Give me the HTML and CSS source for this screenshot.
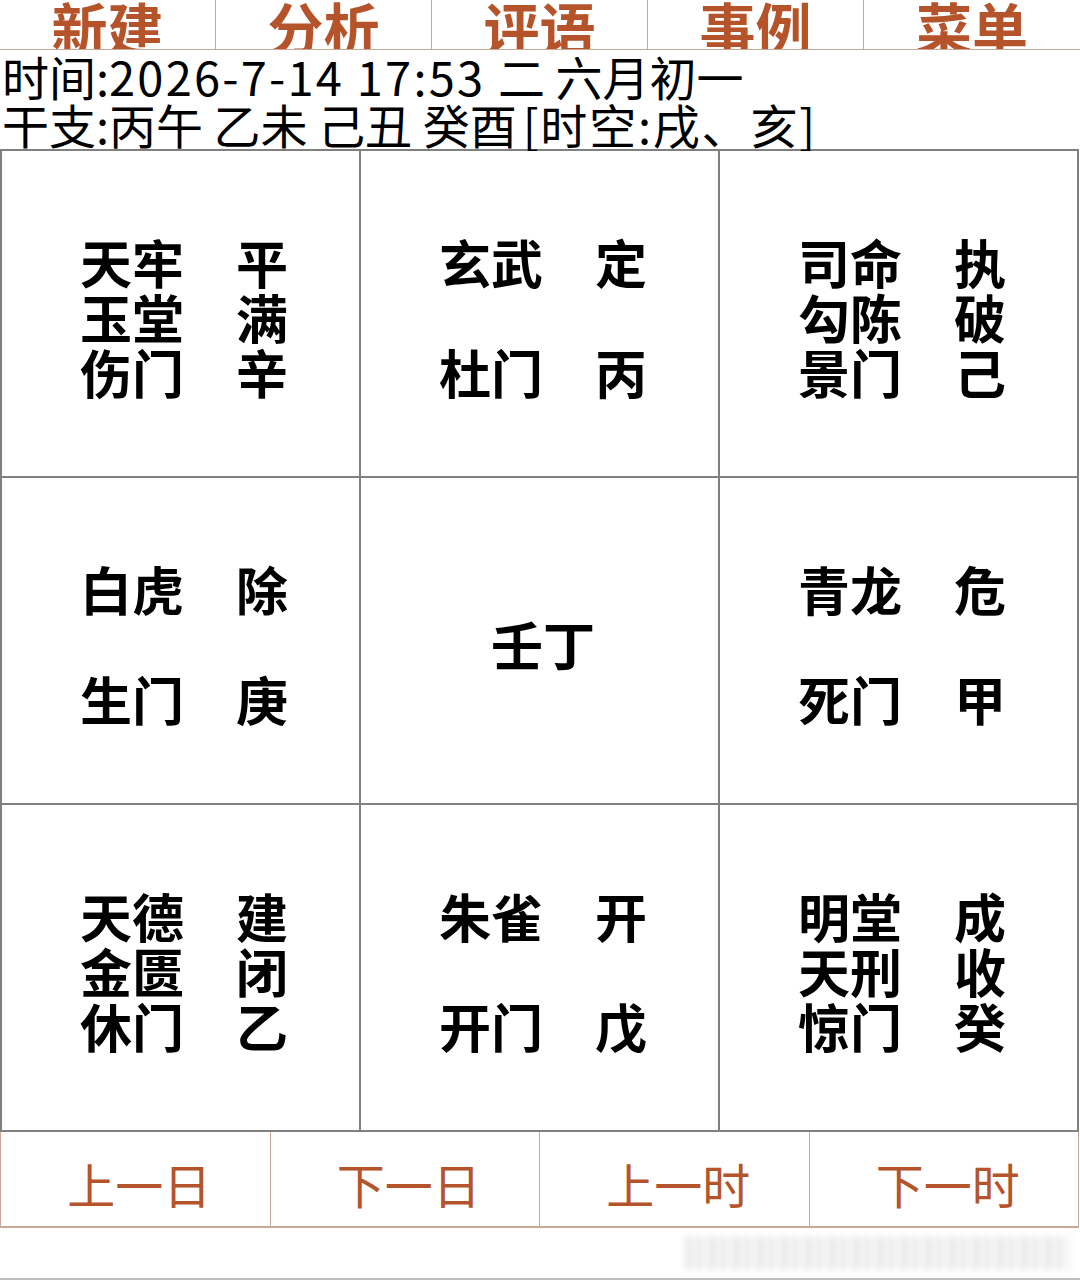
FILE: index.html
```html
<!DOCTYPE html>
<html lang="zh-CN">
<head>
<meta charset="utf-8">
<title>奇门</title>
<link rel="stylesheet" href="styles.css">
</head>
<body>
<div class="topnav">
  <div class="tab"><span>新建</span></div>
  <div class="tab"><span>分析</span></div>
  <div class="tab"><span>评语</span></div>
  <div class="tab"><span>事例</span></div>
  <div class="tab"><span>菜单</span></div>
</div>
<div class="info">
  <div class="info-line">时间:<span class="num">2026-7-14 17:53 </span>二 六月初一</div>
  <div class="info-line">干支:丙午 乙未 己丑 癸酉<span class="br">[时空:戌、亥]</span></div>
</div>
<div class="board">
  <div class="cell"><div class="lines"><div class="ln">天牢　平</div><div class="ln">玉堂　满</div><div class="ln">伤门　辛</div></div></div>
  <div class="cell"><div class="lines"><div class="ln">玄武　定</div><div class="ln blank"> </div><div class="ln">杜门　丙</div></div></div>
  <div class="cell"><div class="lines"><div class="ln">司命　执</div><div class="ln">勾陈　破</div><div class="ln">景门　己</div></div></div>
  <div class="cell"><div class="lines"><div class="ln">白虎　除</div><div class="ln blank"> </div><div class="ln">生门　庚</div></div></div>
  <div class="cell"><div class="lines"><div class="ln">壬丁</div></div></div>
  <div class="cell"><div class="lines"><div class="ln">青龙　危</div><div class="ln blank"> </div><div class="ln">死门　甲</div></div></div>
  <div class="cell"><div class="lines"><div class="ln">天德　建</div><div class="ln">金匮　闭</div><div class="ln">休门　乙</div></div></div>
  <div class="cell"><div class="lines"><div class="ln">朱雀　开</div><div class="ln blank"> </div><div class="ln">开门　戊</div></div></div>
  <div class="cell"><div class="lines"><div class="ln">明堂　成</div><div class="ln">天刑　收</div><div class="ln">惊门　癸</div></div></div>
</div>
<div class="bottomnav">
  <div class="btn">上一日</div>
  <div class="btn">下一日</div>
  <div class="btn">上一时</div>
  <div class="btn">下一时</div>
</div>
<div class="footer">
  <div class="watermark"></div>
</div>
</body>
</html>
```
FILE: styles.css
```css
html, body {
  margin: 0;
  padding: 0;
  background: #ffffff;
}
body {
  width: 1080px;
  font-family: "Noto Sans CJK SC", "Noto Sans", sans-serif;
  color: #000;
}

/* top tabs */
.topnav {
  display: grid;
  grid-template-columns: repeat(5, 216px);
  height: 49px;
  border-bottom: 1px solid #c7a996;
}
.tab {
  display: flex;
  justify-content: center;
  align-items: flex-end;
  overflow: hidden;
  border-right: 1px solid #c7a996;
}
.tab:last-child {
  border-right: none;
}
.tab span {
  font-size: 56px;
  font-weight: 700;
  line-height: 56px;
  color: #b5532b;
  margin-bottom: -5px;
}

/* info */
.info {
  padding: 2px 0 0 2px;
  height: 99px;
  box-sizing: border-box;
  font-size: 47px;
  line-height: 48px;
  white-space: nowrap;
}
.info-line {
  height: 48px;
}
.num {
  letter-spacing: 2.2px;
}
.br {
  letter-spacing: 1.8px;
  padding-left: 6px;
}

/* board */
.board {
  display: grid;
  grid-template-columns: repeat(3, 357px);
  grid-template-rows: repeat(3, 325px);
  gap: 2px;
  padding: 2px;
  width: 1079px;
  box-sizing: border-box;
  background: #808080;
}
.cell {
  background: #ffffff;
  display: flex;
  align-items: center;
  justify-content: center;
  padding: 5px 0 0 7px;
  box-sizing: border-box;
}
.lines {
  font-size: 52px;
  font-weight: 700;
  line-height: 55px;
}
.ln {
  white-space: pre;
  height: 55px;
}

/* bottom buttons */
.bottomnav {
  display: grid;
  grid-template-columns: repeat(4, 1fr);
  width: 1079px;
  height: 96px;
  box-sizing: border-box;
  border-right: 1px solid #c7a996;
  border-bottom: 2px solid #c7a996;
}
.btn {
  display: flex;
  justify-content: center;
  align-items: center;
  padding: 8px 0 0 8px;
  font-size: 48px;
  line-height: 48px;
  color: #b5532b;
  border-left: 1px solid #c7a996;
}

/* footer */
.footer {
  height: 52px;
  box-sizing: border-box;
  border-bottom: 2px solid #bdbdbd;
  display: flex;
  justify-content: flex-end;
  padding: 8px 10px 0 0;
}
.watermark {
  width: 385px;
  height: 34px;
  background: repeating-linear-gradient(90deg, #e4e4e4 0 6px, #f4f4f4 6px 13px, #dedede 13px 16px, #f7f7f7 16px 24px);
  filter: blur(3px);
  opacity: 0.85;
}
```
